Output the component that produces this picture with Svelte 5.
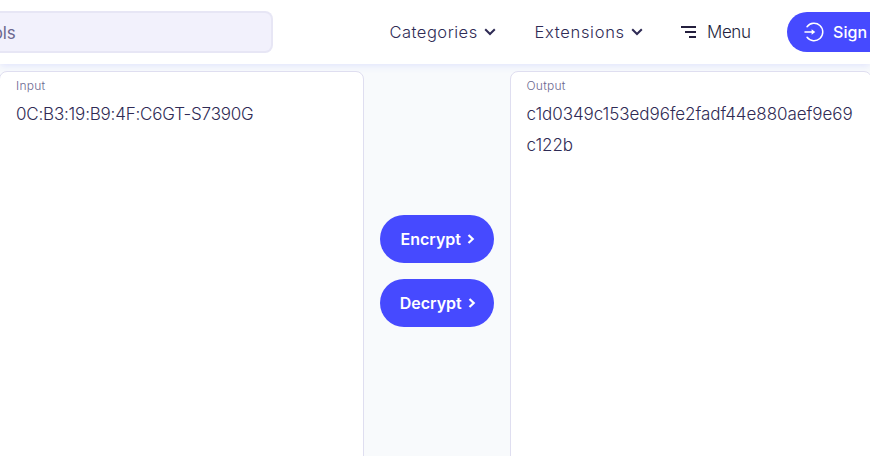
<script>
  const links = ['Categories', 'Extensions'];
  const actions = ['Encrypt', 'Decrypt'];
  const input = '0C:B3:19:B9:4F:C6GT-S7390G';
  const output = ['c1d0349c153ed96fe2fadf44e880aef9e69', 'c122b'];
</script>

<div class="page">
  <header>
    <div class="search"><span>ools</span></div>
    <nav>
      {#each links as label, i}
        <a class="link l{i}" href="#top">
          <span>{label}</span>
          <svg width="12" height="8" viewBox="0 0 12 8"><path d="M1.2 1.2 6 6l4.8-4.8" /></svg>
        </a>
      {/each}
    </nav>
    <div class="menu">
      <svg width="16" height="12" viewBox="0 0 16 12"><path d="M0 1h15M4 6h11M8 11h7" /></svg>
      <span>Menu</span>
    </div>
    <button class="sign">
      <svg width="20" height="20" viewBox="0 0 20 20">
        <path d="M3.05 4.7A8.75 8.75 0 1 1 3.05 15.3M1 10h8" />
        <path class="tip" d="M7.6 7.3 11.3 10l-3.7 2.7Z" />
      </svg>
      <span>Sign</span>
    </button>
  </header>
  <main>
    <section class="panel in">
      <h2>Input</h2>
      <p>{input}</p>
    </section>
    <div class="actions">
      {#each actions as label}
        <button class="action">
          <span>{label}</span>
          <svg width="8" height="10" viewBox="0 0 8 10"><path d="m1.5 1 4.2 4-4.2 4" /></svg>
        </button>
      {/each}
    </div>
    <section class="panel out">
      <h2>Output</h2>
      {#each output as line}<p>{line}</p>{/each}
    </section>
  </main>
</div>

<style>
  .page {
    width: 870px;
    height: 456px;
    overflow: hidden;
    display: flex;
    flex-direction: column;
    background: #f8fafc;
    color: #2f2b55;
    font-family: Inter, "Noto Sans", sans-serif;
  }
  .page * { box-sizing: border-box; }
  .page span, p, h2 { white-space: nowrap; }
  svg { flex: none; fill: none; stroke: currentColor; }
  button { border: 0; padding: 0; font-family: inherit; color: #fff; background: #464aff; }
  header {
    flex: none;
    height: 64px;
    display: flex;
    align-items: center;
    background: #fff;
    box-shadow: 0 1px 8px rgba(70, 74, 255, 0.15);
  }
  header > * { flex: none; }
  .search {
    width: 273px;
    height: 42px;
    display: flex;
    align-items: center;
    justify-content: flex-end;
    padding: 1px 255.5px 0 0;
    border: 2px solid #e7e6f5;
    border-left: 0;
    border-radius: 0 8px 8px 0;
    background: #f2f1fc;
    color: #6c6890;
    font-size: 17px;
    font-weight: 400;
    letter-spacing: -0.2px;
  }
  nav { display: flex; }
  .link {
    flex: none;
    display: flex;
    align-items: center;
    gap: 6px;
    color: inherit;
    text-decoration: none;
    font-size: 16.5px;
    font-weight: 350;
    line-height: 24px;
    letter-spacing: 0.5px;
  }
  .link span { width: 89px; padding-left: 0.5px; }
  .l0 { margin-left: 116px; width: 107px; }
  .l1 { margin-left: 38px; width: 109px; letter-spacing: 0.7px; }
  .l1 span { width: 91px; }
  .link svg { stroke-width: 2; }
  .menu {
    display: flex;
    align-items: center;
    margin-left: 38px;
    gap: 10px;
    width: 106px;
    color: #241f3d;
    font-size: 17px;
    font-weight: 350;
    letter-spacing: -0.4px;
  }
  .menu svg { stroke-width: 2; }
  .sign {
    width: 120px;
    height: 40px;
    display: flex;
    align-items: center;
    gap: 9px;
    padding-left: 17px;
    border-radius: 20px;
    font-size: 16px;
    font-weight: 500;
    letter-spacing: 0.1px;
  }
  .sign svg { stroke-width: 1.5; stroke-linecap: round; }
  .sign .tip { fill: #fff; stroke: none; }
  main {
    flex: 1;
    display: flex;
    padding-top: 7px;
    margin-left: -1px;
    width: 873px;
  }
  .panel {
    flex: none;
    height: 420px;
    padding: 4px 0 0 15.5px;
    background: #fff;
    border: 1px solid #dfdef0;
    border-radius: 8px;
  }
  .in { width: 365px; padding-left: 16px; }
  .out { width: 362px; }
  h2 { margin: 0 0 3px; font-size: 12px; line-height: 20px; font-weight: 350; letter-spacing: 0.25px; color: #6c6890; }
  p { margin: 0; font-size: 17px; line-height: 31px; font-weight: 350; letter-spacing: -0.05px; }
  .in p { letter-spacing: -0.2px; }
  .actions {
    width: 146px;
    display: flex;
    flex-direction: column;
    align-items: center;
    gap: 16px;
    padding-top: 144px;
  }
  .action {
    width: 114px;
    height: 48px;
    display: flex;
    align-items: center;
    justify-content: center;
    gap: 6.5px;
    padding-left: 2px;
    border-radius: 24px;
    font-size: 16px;
    font-weight: 600;
  }
  .action svg { stroke-width: 2.2; }
</style>
